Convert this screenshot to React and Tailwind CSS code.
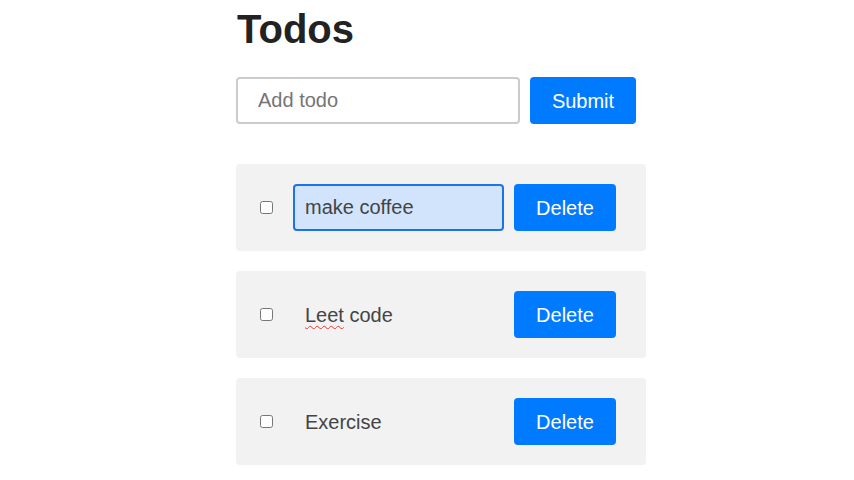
import { useState } from "react";

const initialTodos = [
  { id: 1, text: "make coffee", done: false },
  { id: 2, text: "Leet code", done: false, typo: "Leet" },
  { id: 3, text: "Exercise", done: false },
];

export default function App() {
  const [todos, setTodos] = useState(initialTodos);
  const [draft, setDraft] = useState("");
  const [editingId] = useState(1);

  const addTodo = (e) => {
    e.preventDefault();
    const text = draft.trim();
    if (!text) return;
    setTodos([...todos, { id: Date.now(), text, done: false }]);
    setDraft("");
  };

  // spellcheck squiggle under the misspelled word
  const renderText = (todo) => {
    if (!todo.typo) return todo.text;
    const rest = todo.text.slice(todo.typo.length);
    return (
      <>
        <span className="underline decoration-wavy decoration-[#e53935] decoration-1 underline-offset-[3px]">
          {todo.typo}
        </span>
        {rest}
      </>
    );
  };

  return (
    <main
      className="min-h-screen bg-white flex justify-center"
      style={{ fontFamily: '"Liberation Sans", Arial, sans-serif' }}
    >
      <div className="w-[410px] ml-[28px]">
        <h1 className="text-[40px] font-bold text-[#222] leading-none pt-[9px] pl-[1px]">
          Todos
        </h1>

        <form onSubmit={addTodo} className="flex gap-[10px] mt-[28px]">
          <input
            type="text"
            value={draft}
            onChange={(e) => setDraft(e.target.value)}
            placeholder="Add todo"
            className="w-[284px] h-[47px] border-2 border-[#ccc] rounded-[4px] px-[20px] text-[20px] text-[#333] placeholder:text-[#757575] outline-none"
          />
          <button
            type="submit"
            className="w-[106px] h-[47px] bg-[#007bff] text-white text-[20px] rounded-[4px]"
          >
            Submit
          </button>
        </form>

        <ul className="mt-[40px] flex flex-col gap-[20px]">
          {todos.map((todo) => (
            <li
              key={todo.id}
              className="bg-[#f2f2f2] rounded-[4px] h-[87px] flex items-center pl-[24px] pr-[30px]"
            >
              <input
                type="checkbox"
                checked={todo.done}
                onChange={() =>
                  setTodos(
                    todos.map((t) =>
                      t.id === todo.id ? { ...t, done: !t.done } : t
                    )
                  )
                }
                className="w-[13px] h-[13px] m-0"
              />
              {todo.id === editingId ? (
                <input
                  type="text"
                  defaultValue={todo.text}
                  className="ml-[20px] w-[211px] h-[47px] border-2 border-[#1a73e8] rounded-[4px] bg-[#d2e3fc] px-[10px] text-[20px] text-[#444] outline-none"
                />
              ) : (
                <span className="ml-[20px] w-[211px] px-[12px] text-[20px] text-[#444]">
                  {renderText(todo)}
                </span>
              )}
              <button
                onClick={() => setTodos(todos.filter((t) => t.id !== todo.id))}
                className="ml-[10px] w-[102px] h-[47px] bg-[#007bff] text-white text-[20px] rounded-[4px]"
              >
                Delete
              </button>
            </li>
          ))}
        </ul>
      </div>
    </main>
  );
}
